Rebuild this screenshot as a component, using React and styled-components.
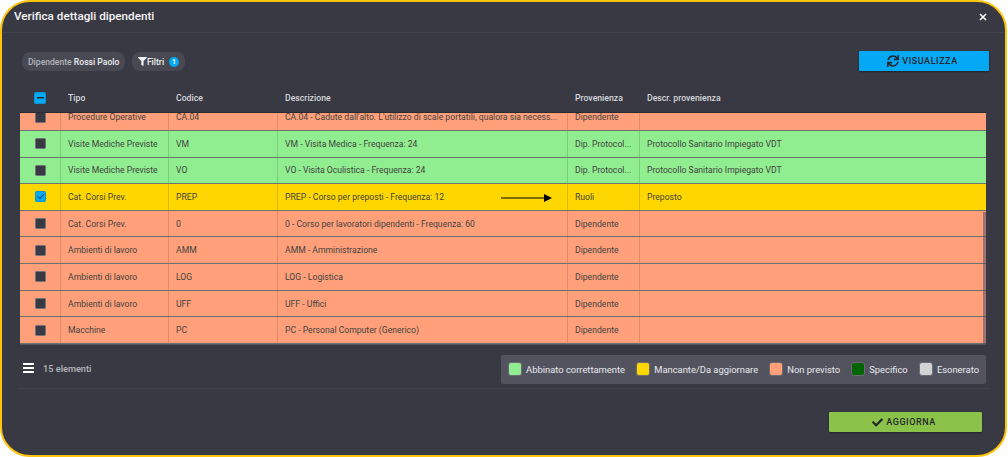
import React from 'react';
import styled, { createGlobalStyle } from 'styled-components';
import { FaSync, FaCheck, FaFilter } from 'react-icons/fa';

const Global = createGlobalStyle`
  html, body { margin: 0; padding: 0; background: #fff; }
  body { font-family: Roboto, "Liberation Sans", sans-serif; }
  * { box-sizing: border-box; }
`;

const Dialog = styled.div`
  width: 1007px;
  height: 457px;
  background: #383943;
  border: 2px solid #fec50c;
  border-radius: 30px;
  display: flex;
  flex-direction: column;
  overflow: hidden;
  color: #fff;
`;
const TitleBar = styled.div`
  height: 31px;
  flex: none;
  padding: 0 18px 0 12px;
  display: flex;
  align-items: center;
  justify-content: space-between;
  border-bottom: 1px solid #42434d;
`;
const Title = styled.div`
  font-size: 11.7px;
  font-weight: 500;
  color: #f4f4f6;
  margin-bottom: 2px;
`;
const CloseBtn = styled.span`
  display: flex;
  color: #fff;
`;
const Toolbar = styled.div`
  height: 50px;
  flex: none;
  padding: 18px 16px 0 20px;
  display: flex;
  align-items: flex-start;
  gap: 7px;
`;
const Chip = styled.div`
  height: 19px;
  width: ${p => p.$w}px;
  margin-top: 1px;
  padding: 0 6px;
  border-radius: 8px;
  background: #484953;
  display: flex;
  align-items: center;
  font-size: 8.6px;
  color: #b4b5bc;
  white-space: pre;
  font-weight: 500;
`;
const ChipStrong = styled.b`
  color: #eeeef1;
  font-weight: 500;
`;
const Badge = styled.span`
  width: 10px;
  height: 10px;
  margin-left: 5px;
  border-radius: 50%;
  background: #03a9f4;
  color: #fff;
  font-size: 7px;
  font-weight: 700;
  display: flex;
  align-items: center;
  justify-content: center;
`;
const Spacer = styled.div`
  flex: 1;
`;
const ActionButton = styled.button`
  width: ${p => p.$w}px;
  height: 20px;
  border: 0;
  border-radius: 1px;
  background: ${p => p.$bg};
  color: #24262e;
  font-family: inherit;
  font-size: 9px;
  font-weight: 500;
  letter-spacing: 0.55px;
  display: flex;
  align-items: center;
  justify-content: center;
  gap: 3px;
  padding: 0 3px 0 0;
  box-shadow: 0 1px 2px rgba(0,0,0,.4);
`;
const Table = styled.div`
  margin: 0 19px 0 18px;
  flex: none;
  height: 262px;
  display: flex;
  flex-direction: column;
  position: relative;
`;
const columns = '40px 108px 109px 290px 72px 1fr';
const HeadRow = styled.div`
  height: 29px;
  flex: none;
  display: grid;
  grid-template-columns: ${columns};
  align-items: center;
  font-size: 8.7px;
  font-weight: 500;
  color: #d6d7dc;
  box-shadow: 0 1px 0 #2a2b33;
  z-index: 1;
`;
const HeadCell = styled.div`
  padding-left: 8px;
`;
const CheckCell = styled.div`
  display: flex;
  justify-content: center;
  align-items: center;
  padding-left: ${p => (p.$head ? 0 : 1)}px;
`;
const Body = styled.div`
  flex: 1;
  overflow: hidden;
  border-bottom: 1px solid #55565f;
`;
const Rows = styled.div`
  margin-top: -7.75px;
`;
const Row = styled.div`
  height: 26.65px;
  display: grid;
  grid-template-columns: ${columns};
  align-items: stretch;
  background: ${p => p.$bg};
  border-bottom: 1.5px solid #6f7070;
  font-size: 8.65px;
  color: #43433f;
`;
const Cell = styled.div`
  padding-left: 7px;
  display: flex;
  align-items: center;
  white-space: nowrap;
  overflow: hidden;
  border-left: 1px solid rgba(0,0,0,.13);
`;
const Box = styled.span`
  width: ${p => (p.$head ? 12 : 11)}px;
  height: ${p => (p.$head ? 12 : 11)}px;
  border-radius: 1.5px;
  background: ${p => (p.$on ? '#03a9f4' : '#383943')};
  border: ${p => (p.$on ? '1px solid #0b93d0' : '1.5px solid #70717a')};
  display: flex;
  align-items: center;
  justify-content: center;
`;
const ScrollThumb = styled.div`
  position: absolute;
  right: 0;
  top: 129px;
  width: 3px;
  height: 133px;
  background: rgba(80,80,100,.55);
`;
const Footer = styled.div`
  height: 44px;
  flex: none;
  margin: 0 15px 0 16px;
  padding: 5px 4px 0 5px;
  display: flex;
  align-items: center;
  justify-content: space-between;
  border-bottom: 1px solid #41424c;
`;
const Count = styled.div`
  display: flex;
  align-items: center;
  gap: 9px;
  padding-bottom: 2px;
  font-size: 9.2px;
  font-weight: 500;
  color: #b6b7bd;
`;
const Legend = styled.div`
  height: 29px;
  padding: 0 7px;
  background: #52535f;
  border-radius: 2px;
  display: flex;
  align-items: center;
  font-size: 9.4px;
  color: #e9e9ee;
`;
const LegendItem = styled.div`
  display: flex;
  align-items: center;
  gap: 4px;
  margin-right: 11.2px;
  &:last-child { margin-right: 0; }
`;
const Swatch = styled.span`
  width: 14px;
  height: 14px;
  border-radius: 3px;
  background: ${p => p.$c};
  border: 1px solid #6a6b74;
`;
const Actions = styled.div`
  flex: 1;
  display: flex;
  justify-content: flex-end;
  padding: 23px 23px 0 0;
`;
const Arrow = styled.svg`
  position: absolute;
  left: 481px;
  top: 110px;
`;

const G = '#90ee90', Y = '#ffd700', O = '#ffa07a';
const rows = [
  [O, 'Procedure Operative', 'CA.04', "CA.04 - Cadute dall'alto. L'utilizzo di scale portatili, qualora sia necess...", 'Dipendente', ''],
  [G, 'Visite Mediche Previste', 'VM', 'VM - Visita Medica - Frequenza: 24', 'Dip. Protocol...', 'Protocollo Sanitario Impiegato VDT'],
  [G, 'Visite Mediche Previste', 'VO', 'VO - Visita Oculistica - Frequenza: 24', 'Dip. Protocol...', 'Protocollo Sanitario Impiegato VDT'],
  [Y, 'Cat. Corsi Prev.', 'PREP', 'PREP - Corso per preposti - Frequenza: 12', 'Ruoli', 'Preposto', true],
  [O, 'Cat. Corsi Prev.', '0', '0 - Corso per lavoratori dipendenti - Frequenza: 60', 'Dipendente', ''],
  [O, 'Ambienti di lavoro', 'AMM', 'AMM - Amministrazione', 'Dipendente', ''],
  [O, 'Ambienti di lavoro', 'LOG', 'LOG - Logistica', 'Dipendente', ''],
  [O, 'Ambienti di lavoro', 'UFF', 'UFF - Uffici', 'Dipendente', ''],
  [O, 'Macchine', 'PC', 'PC - Personal Computer (Generico)', 'Dipendente', ''],
];
const legend = [
  [G, 'Abbinato correttamente'],
  [Y, 'Mancante/Da aggiornare'],
  [O, 'Non previsto'],
  ['#006400', 'Specifico'],
  ['#d3d3d3', 'Esonerato'],
];

export default function App() {
  return (
    <>
      <Global />
      <Dialog>
        <TitleBar>
          <Title>Verifica dettagli dipendenti</Title>
          <CloseBtn>
            <svg width="8" height="8" viewBox="0 0 8 8"><path d="M1 1l6 6M7 1L1 7" stroke="currentColor" strokeWidth="1.6" /></svg>
          </CloseBtn>
        </TitleBar>
        <Toolbar>
          <Chip $w={103}>Dipendente <ChipStrong>Rossi Paolo</ChipStrong></Chip>
          <Chip $w={53}>
            <FaFilter size={9} color="#f2f2f5" />
            <ChipStrong>Filtri</ChipStrong>
            <Badge>1</Badge>
          </Chip>
          <Spacer />
          <ActionButton $w={130} $bg="#03a9f4">
            <FaSync size={12} />
            VISUALIZZA
          </ActionButton>
        </Toolbar>
        <Table>
          <HeadRow>
            <CheckCell $head>
              <Box $on $head>
                <svg width="7" height="2" viewBox="0 0 7 2"><rect width="7" height="1.4" fill="#24262e" /></svg>
              </Box>
            </CheckCell>
            <HeadCell>Tipo</HeadCell>
            <HeadCell>Codice</HeadCell>
            <HeadCell>Descrizione</HeadCell>
            <HeadCell>Provenienza</HeadCell>
            <HeadCell>Descr. provenienza</HeadCell>
          </HeadRow>
          <Body>
            <Rows>
              {rows.map((r, i) => (
                <Row key={i} $bg={r[0]}>
                  <CheckCell>
                    <Box $on={r[6]}>
                      {r[6] && <svg width="8" height="7" viewBox="0 0 8 7" fill="none"><path d="M1 3.5l2 2L7 1" stroke="#24262e" strokeWidth="1" /></svg>}
                    </Box>
                  </CheckCell>
                  <Cell>{r[1]}</Cell>
                  <Cell>{r[2]}</Cell>
                  <Cell>{r[3]}</Cell>
                  <Cell>{r[4]}</Cell>
                  <Cell>{r[5]}</Cell>
                </Row>
              ))}
            </Rows>
          </Body>
          <ScrollThumb />
          <Arrow width="52" height="10" viewBox="0 0 52 10">
            <path d="M0 5h43" stroke="#000" strokeWidth="1" />
            <path d="M43 1l8 4-8 4z" fill="#000" />
          </Arrow>
        </Table>
        <Footer>
          <Count>
            <svg width="11" height="10" viewBox="0 0 11 10" fill="#fff"><rect width="11" height="2" /><rect y="4" width="11" height="2" /><rect y="8" width="11" height="2" /></svg>
            15 elementi
          </Count>
          <Legend>
            {legend.map(([c, t]) => (
              <LegendItem key={t}><Swatch $c={c} />{t}</LegendItem>
            ))}
          </Legend>
        </Footer>
        <Actions>
          <ActionButton $w={153} $bg="#8bc34a">
            <FaCheck size={11} />
            AGGIORNA
          </ActionButton>
        </Actions>
      </Dialog>
    </>
  );
}
